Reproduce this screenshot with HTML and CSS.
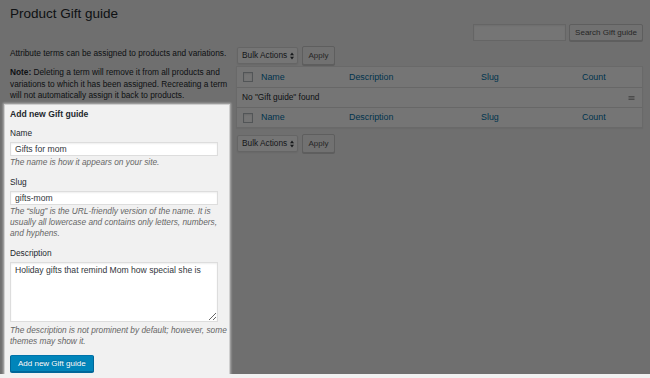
FILE: index.html
```html
<!DOCTYPE html>
<html lang="en">

<head>
    <meta charset="UTF-8" />
    <meta name="viewport" content="width=device-width, initial-scale=1.0" />
    <title>Product Gift guide</title>

    <link rel="stylesheet" href="styles.css">
</head>

<body>
    <div class="wrap">
        <h1 class="page-title">Product Gift guide</h1>

        <form class="search-box">
            <input type="search" class="search-input" />
            <button type="button" class="button">Search Gift guide</button>
        </form>

        <div class="col-wrap">
            <div class="col-left">
                <p class="intro">Attribute terms can be assigned to products and variations.</p>
                <p class="intro"><strong>Note:</strong> Deleting a term will remove it from all products and variations to which it has been assigned. Recreating a term will not automatically assign it back to products.</p>

                <div class="form-wrap">
                    <h2>Add new Gift guide</h2>
                    <form id="addTag">
                        <div class="form-field">
                            <label for="tagName">Name</label>
                            <input type="text" id="tagName" value="Gifts for mom" />
                            <p class="help">The name is how it appears on your site.</p>
                        </div>
                        <div class="form-field">
                            <label for="tagSlug">Slug</label>
                            <input type="text" id="tagSlug" value="gifts-mom" />
                            <p class="help">The &ldquo;slug&rdquo; is the URL-friendly version of the name. It is usually all lowercase and contains only letters, numbers, and hyphens.</p>
                        </div>
                        <div class="form-field">
                            <label for="tagDesc">Description</label>
                            <textarea id="tagDesc">Holiday gifts that remind Mom how special she is</textarea>
                            <p class="help">The description is not prominent by default; however, some themes may show it.</p>
                        </div>
                        <button type="button" class="button-primary">Add new Gift guide</button>
                    </form>
                </div>
            </div>

            <div class="col-right">
                <div class="tablenav">
                    <span class="bulk-select">Bulk Actions
                        <svg width="4" height="8" viewBox="0 0 4 8"><path d="M0 3.3L2 0.6L4 3.3Z M0 4.7L2 7.4L4 4.7Z" fill="#32373c"/></svg>
                    </span>
                    <button type="button" class="button apply">Apply</button>
                </div>

                <div class="list-table">
                    <div class="list-row head">
                        <span class="check"><span class="checkbox"></span></span>
                        <a class="col">Name</a>
                        <a class="col">Description</a>
                        <a class="col">Slug</a>
                        <a class="col">Count</a>
                    </div>
                    <div class="list-row empty">
                        <span>No "Gift guide" found</span>
                        <svg class="handle" width="7" height="4" viewBox="0 0 7 4"><path d="M0.5 0.5H6.5M0.5 2H6.5M0.5 3.5H6.5" stroke="#999" stroke-width="0.9"/></svg>
                    </div>
                    <div class="list-row head">
                        <span class="check"><span class="checkbox"></span></span>
                        <a class="col">Name</a>
                        <a class="col">Description</a>
                        <a class="col">Slug</a>
                        <a class="col">Count</a>
                    </div>
                </div>

                <div class="tablenav bottom">
                    <span class="bulk-select">Bulk Actions
                        <svg width="4" height="8" viewBox="0 0 4 8"><path d="M0 3.3L2 0.6L4 3.3Z M0 4.7L2 7.4L4 4.7Z" fill="#32373c"/></svg>
                    </span>
                    <button type="button" class="button apply">Apply</button>
                </div>
            </div>
        </div>
    </div>
</body>

</html>
```

FILE: styles.css
```css
* {
    box-sizing: border-box;
}

body {
    margin: 0;
    background-color: #f1f1f1;
    color: #23282d;
    font-family: "Liberation Sans", Arial, sans-serif;
    font-size: 8.3px;
    line-height: 1.45;
}

.wrap {
    padding: 0 7px 0 5px;
}

.page-title {
    margin: 5px 0 0 5px;
    font-size: 13.5px;
    font-weight: 400;
    line-height: 18px;
}

input,
textarea,
button {
    font-family: inherit;
    font-size: 8px;
    margin: 0;
}

.search-box {
    display: flex;
    justify-content: flex-end;
    gap: 3px;
    height: 17px;
    margin: 1px 0 0;
}

.search-input {
    width: 93px;
    height: 17px;
    border: 1px solid #ddd;
    background-color: #fff;
    box-shadow: inset 0 1px 2px rgba(0, 0, 0, 0.07);
}

.button {
    height: 17px;
    padding: 0 5px;
    border: 1px solid #ccc;
    border-radius: 2px;
    background-color: #f7f7f7;
    box-shadow: 0 1px 0 #ccc;
    color: #555;
    line-height: 15px;
}

.search-box .button {
    width: 74px;
}

.col-wrap {
    display: flex;
    gap: 7px;
}

.col-left {
    width: 224px;
    flex-shrink: 0;
}

.col-right {
    flex: 1;
    padding-top: 5px;
}

.intro {
    margin: 7px 0 7.3px;
    padding-left: 5px;
    line-height: 11.7px;
}

.intro + .intro {
    margin-top: 0;
    margin-bottom: 3px;
}

/* the highlighted panel, everything else is dimmed by its shadow */
.form-wrap {
    position: relative;
    z-index: 1;
    padding: 4px 0 2px 5px;
    background-color: #f1f1f1;
    box-shadow: 0 0 0 1px #cfcfcf, 0 0 2px 2px rgba(255, 255, 255, 0.45), 0 0 0 3000px rgba(0, 0, 0, 0.54);
}

.form-wrap h2 {
    margin: 0 0 8px;
    font-size: 8.6px;
    line-height: 11px;
    font-weight: bold;
}

.form-field {
    margin-bottom: 9.5px;
}

.form-field label {
    display: block;
    margin-bottom: 2.5px;
    line-height: 11px;
}

.form-field input,
.form-field textarea {
    display: block;
    width: 95%;
    border: 1px solid #ddd;
    background-color: #fff;
    box-shadow: inset 0 1px 2px rgba(0, 0, 0, 0.07);
    color: #32373c;
    font-size: 8.6px;
}

.form-field input {
    height: 14px;
    padding: 0 4px;
}

.form-field textarea {
    height: 60px;
    padding: 1px 4px;
    resize: vertical;
    line-height: 1.4;
}

.help {
    margin: 1.5px 0 0;
    color: #666;
    font-style: italic;
    line-height: 10.8px;
}

.form-field textarea + .help {
    margin-top: 3.3px;
}

.button-primary {
    height: 17px;
    margin-top: -1px;
    padding: 0 7px;
    border: 1px solid #0073aa;
    border-color: #0073aa #006799 #006799;
    border-radius: 2px;
    background-color: #0085ba;
    box-shadow: 0 1px 0 #006799;
    color: #fff;
    text-shadow: 0 -1px 1px #006799;
    line-height: 15px;
}

.tablenav {
    display: flex;
    align-items: center;
    gap: 4px;
    height: 19px;
    margin-bottom: 1px;
}

.tablenav.bottom {
    margin: 6px 0 0;
}

.bulk-select {
    display: flex;
    align-items: center;
    justify-content: space-between;
    width: 61px;
    height: 17px;
    margin-left: 1px;
    padding: 0 3px 0 4px;
    border: 1px solid #ddd;
    border-radius: 2px;
    background-color: #fff;
    box-shadow: 0 1px 2px rgba(0, 0, 0, 0.07);
    color: #32373c;
}

.button.apply {
    width: 33px;
    height: 19px;
    padding: 0;
    line-height: 17px;
}

.list-table {
    border: 1px solid #e5e5e5;
    background-color: #fff;
    box-shadow: 0 1px 1px rgba(0, 0, 0, 0.04);
}

.list-row {
    display: grid;
    grid-template-columns: 20px 88px 132px 101px 1fr;
    align-items: center;
    height: 20px;
}

.list-row + .list-row {
    border-top: 1px solid #e1e1e1;
}

.list-row .col {
    padding-left: 4px;
    color: #0073aa;
    font-size: 8.9px;
}

.check {
    padding-left: 6px;
    display: flex;
}

.checkbox {
    width: 10px;
    height: 10px;
    border: 1px solid #b4b9be;
    background-color: #fff;
    box-shadow: inset 0 1px 2px rgba(0, 0, 0, 0.1);
}

.list-row.empty {
    display: flex;
    justify-content: space-between;
    padding: 0 7px 0 5px;
}

.handle {
    display: block;
}
```
